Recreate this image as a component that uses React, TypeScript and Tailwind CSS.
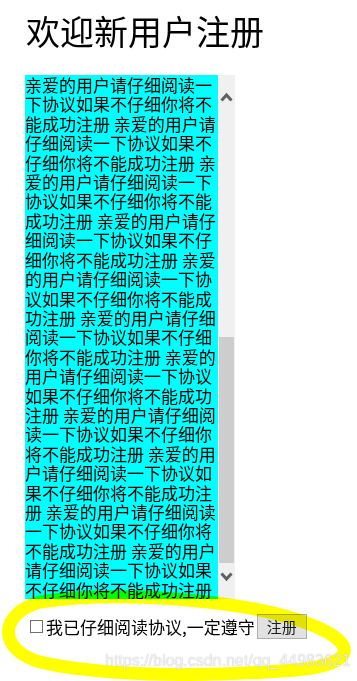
// Registration page: agreement text in a cyan scroll box, accept checkbox + submit button.
// The scrollbar is drawn by hand so the headless browser renders it the same every time.
const AGREEMENT = '亲爱的用户请仔细阅读一下协议如果不仔细你将不能成功注册 ';
const REPEAT = 22;

function Chevron({ up }: { up?: boolean }) {
  return (
    <svg width="13" height="10" viewBox="0 0 13 10" className="block">
      <polyline
        points={up ? '1.5,8.5 6.5,3 11.5,8.5' : '1.5,1.5 6.5,7 11.5,1.5'}
        fill="none"
        stroke="#606060"
        strokeWidth="3"
      />
    </svg>
  );
}

function ScrollBar() {
  return (
    <div className="flex w-[17px] flex-col bg-[#f0f0f0]">
      <div className="flex h-[36px] shrink-0 items-start justify-center pt-[17px]">
        <Chevron up />
      </div>
      <div className="flex flex-1 flex-col justify-end px-[1px]">
        <div className="h-[226px] bg-[#cdcdcd]" />
      </div>
      <div className="flex h-[36px] shrink-0 items-end justify-center pb-[17px]">
        <Chevron />
      </div>
    </div>
  );
}

export default function App() {
  const text = Array.from({ length: REPEAT }, () => AGREEMENT).join('').trimEnd();
  const cjk = { fontFamily: '"Noto Sans CJK SC", "Noto Sans", sans-serif' };

  return (
    <div className="relative h-[681px] w-[357px] overflow-hidden bg-white text-black" style={cjk}>
      <h1 className="pl-[26px] pt-[14px] text-[34px] leading-[34px] font-normal">欢迎新用户注册</h1>

      {/* agreement box, scrolled to the end */}
      <div className="ml-[25px] mt-[27px] flex h-[524px] w-[210px]">
        <div className="flex w-[193px] flex-col justify-end overflow-hidden bg-[#00ffff]">
          <p className="text-[17px] leading-[19.4px]">{text}</p>
        </div>
        <ScrollBar />
      </div>

      {/* accept row */}
      <div className="ml-[30px] mt-[15px] flex items-center">
        <input
          type="checkbox"
          className="m-0 h-[13px] w-[13px] appearance-none border border-[#707070] bg-white"
        />
        <span className="ml-[3px] text-[17px] leading-[20px]">我已仔细阅读协议,一定遵守</span>
        <button className="ml-[2px] h-[25px] w-[50px] border border-[#adadad] bg-[#e1e1e1] text-[15px] leading-[22px] text-[#1a1a1a]">
          注册
        </button>
      </div>

      {/* highlighter ring drawn over the screenshot */}
      <svg
        className="pointer-events-none absolute inset-0 mix-blend-multiply"
        width="357"
        height="681"
        viewBox="0 0 357 681"
      >
        <path
          d="M 40 602 C 120 590, 250 600, 312 625 C 362 645, 356 668, 280 671 C 200 677, 100 676, 40 662 C -2 650, -2 614, 40 602 Z"
          fill="none"
          stroke="#ffff00"
          strokeWidth="13"
          strokeLinejoin="round"
        />
      </svg>

      <div
        className="pointer-events-none absolute left-[105px] top-[651px] text-[16px] leading-[20px] text-white/80"
        style={{ fontFamily: '"Liberation Sans", Arial, sans-serif', textShadow: '0 0 1px rgba(0,0,0,0.35)' }}
      >
        https://blog.csdn.net/qq_44983621
      </div>
    </div>
  );
}
